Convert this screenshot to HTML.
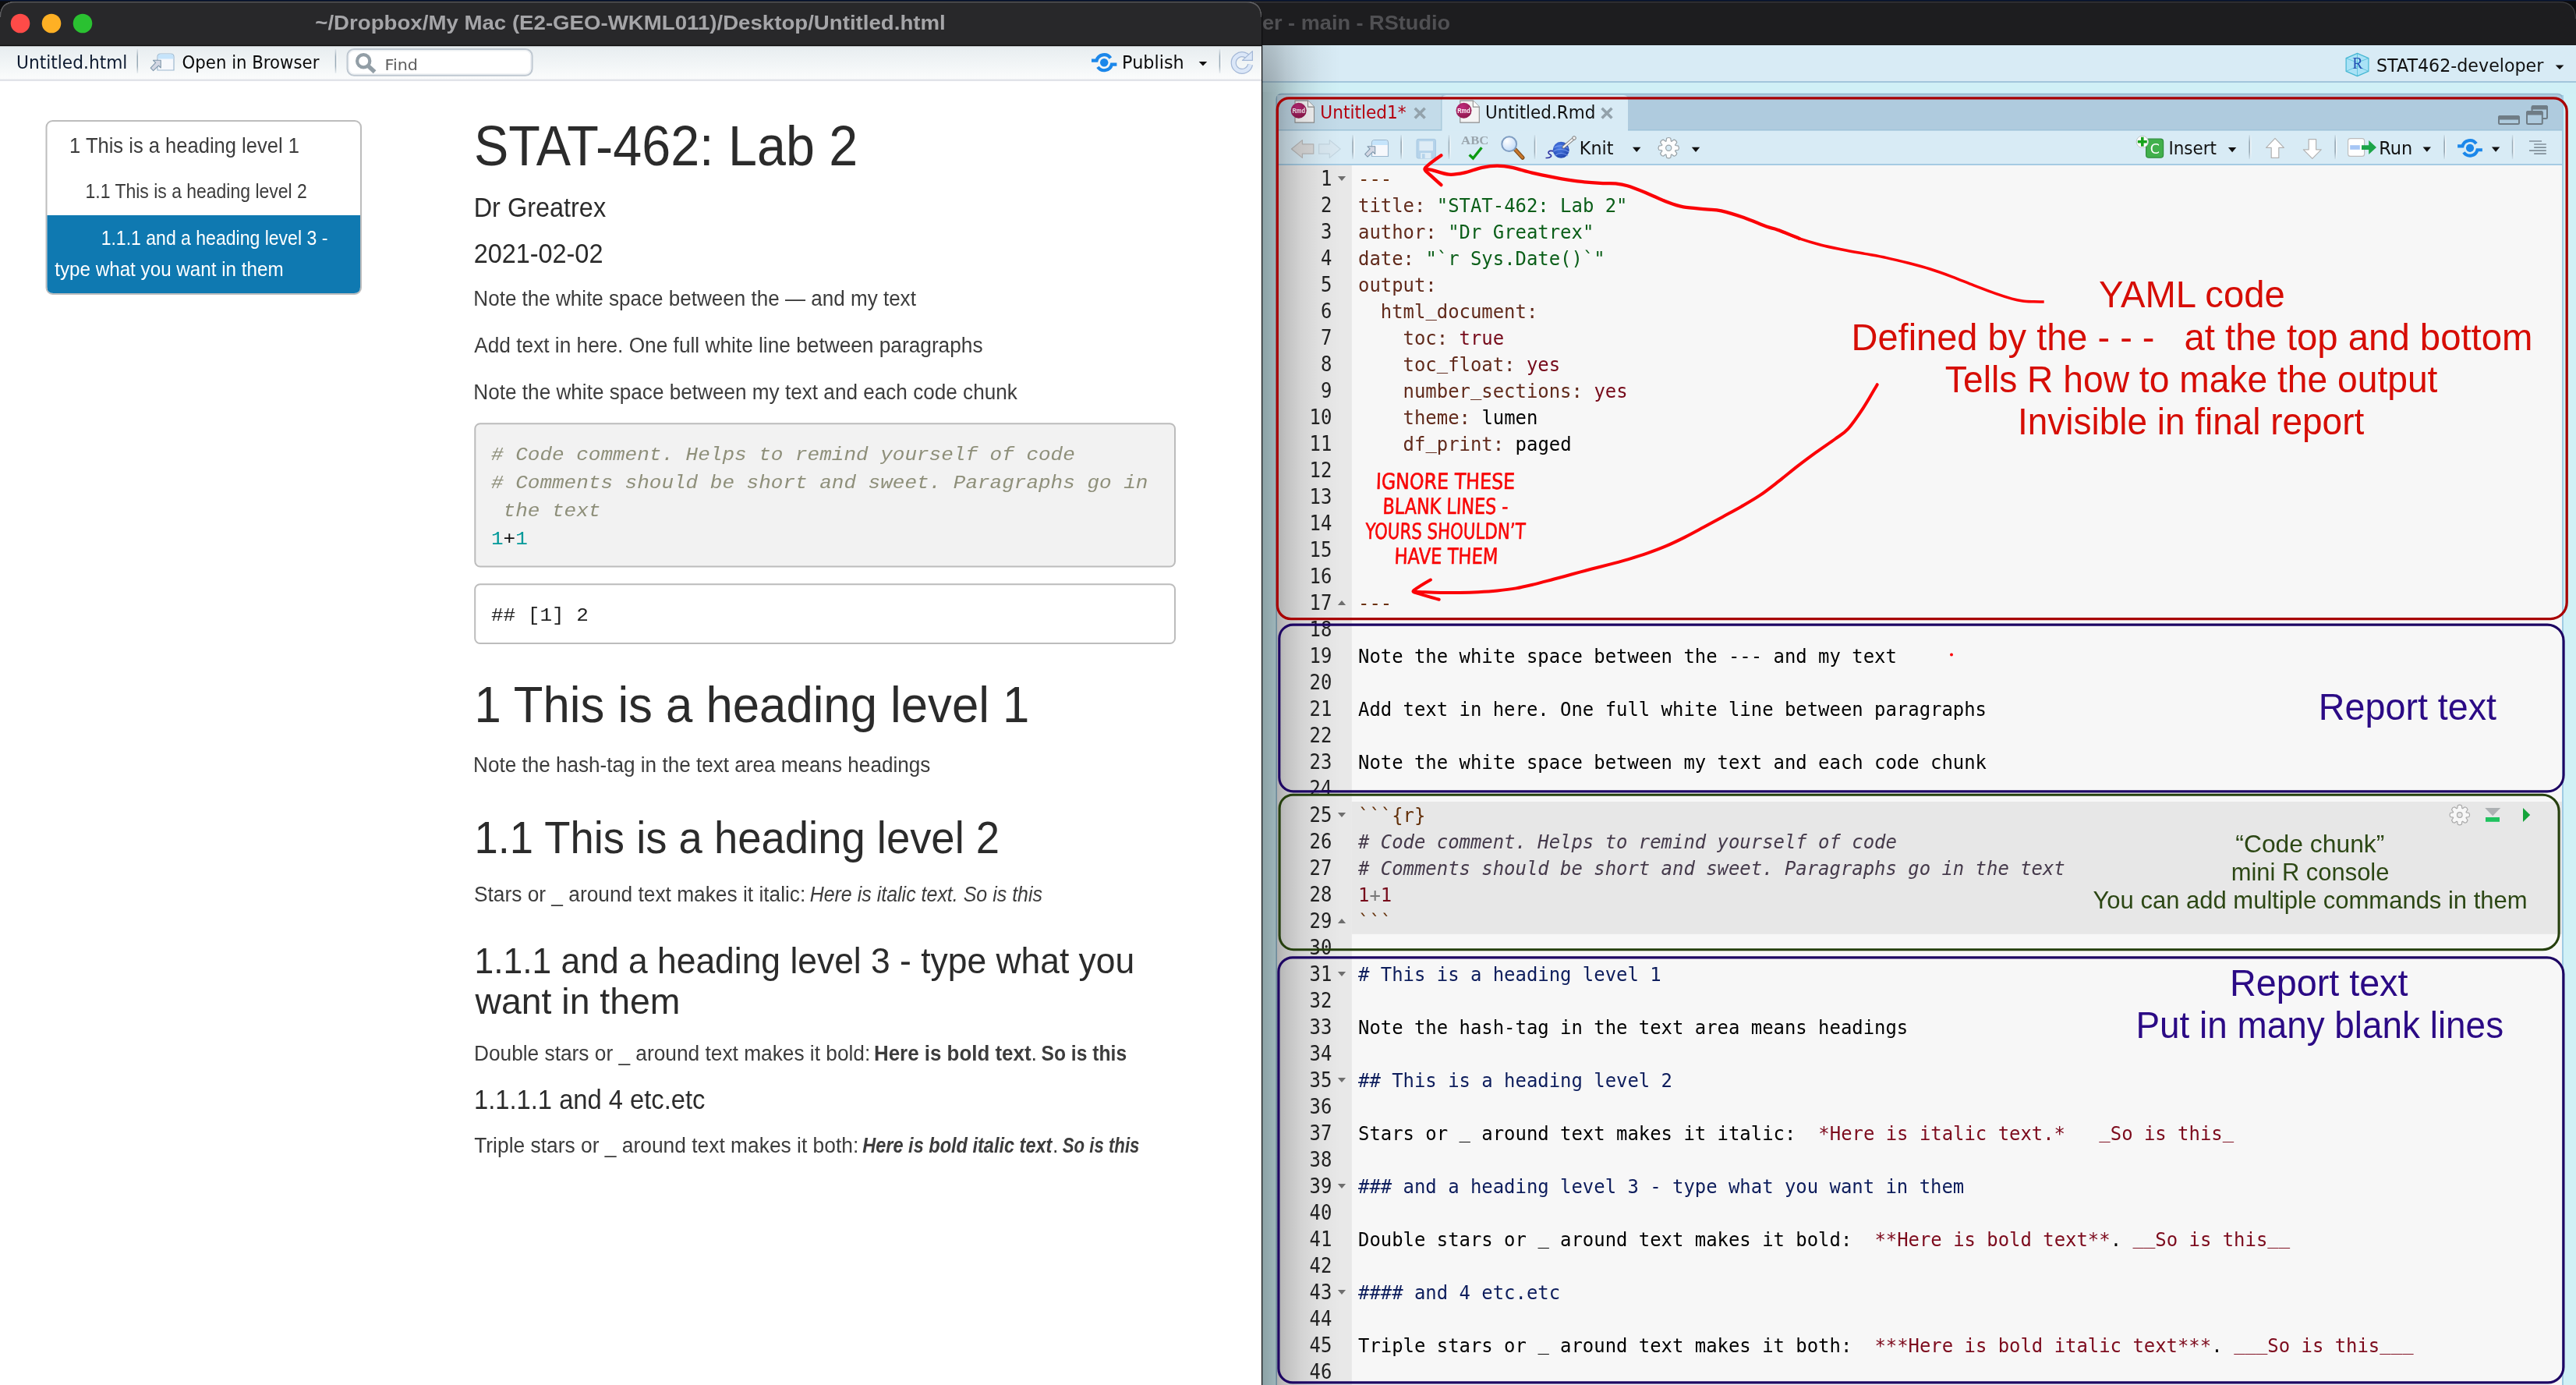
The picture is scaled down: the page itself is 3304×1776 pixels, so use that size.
<!DOCTYPE html>
<html lang="en"><head><meta charset="utf-8"><title>RStudio - anatomy of an R Markdown file</title>
<style>
html,body{margin:0;padding:0;background:#0a1220;overflow:hidden}
svg{display:block;will-change:transform}
text{white-space:pre}
</style></head><body>
<svg width="3304" height="1776" viewBox="0 0 3304 1776">
<defs>
<linearGradient id="tb1" x1="0" y1="0" x2="0" y2="1"><stop offset="0" stop-color="#e7edf0"/><stop offset="1" stop-color="#fbfcfc"/></linearGradient>
<linearGradient id="shadow" x1="0" y1="0" x2="1" y2="0"><stop offset="0" stop-color="#000" stop-opacity=".33"/><stop offset=".17" stop-color="#000" stop-opacity=".25"/><stop offset=".3" stop-color="#000" stop-opacity=".17"/><stop offset=".5" stop-color="#000" stop-opacity=".09"/><stop offset=".75" stop-color="#000" stop-opacity=".03"/><stop offset="1" stop-color="#000" stop-opacity="0"/></linearGradient>
<linearGradient id="shadowtop" x1="0" y1="0" x2="1" y2="1"><stop offset="0" stop-color="#d8ebf5" stop-opacity=".35"/><stop offset=".6" stop-color="#d8ebf5" stop-opacity="0"/></linearGradient>
<linearGradient id="sepd" x1="0" y1="0" x2="0" y2="1"><stop offset="0" stop-color="#9aabb7" stop-opacity=".15"/><stop offset=".3" stop-color="#9aabb7" stop-opacity="1"/><stop offset=".7" stop-color="#9aabb7" stop-opacity="1"/><stop offset="1" stop-color="#9aabb7" stop-opacity=".15"/></linearGradient>
<linearGradient id="sepl" x1="0" y1="0" x2="0" y2="1"><stop offset="0" stop-color="#fff" stop-opacity=".1"/><stop offset=".3" stop-color="#fff" stop-opacity=".75"/><stop offset=".7" stop-color="#fff" stop-opacity=".75"/><stop offset="1" stop-color="#fff" stop-opacity=".1"/></linearGradient>
<radialGradient id="rmdg" cx=".4" cy=".3" r=".8"><stop offset="0" stop-color="#c02a7c"/><stop offset="1" stop-color="#8a1746"/></radialGradient>
<radialGradient id="lens" cx=".35" cy=".3" r=".8"><stop offset="0" stop-color="#ffffff"/><stop offset="1" stop-color="#bcd7f7"/></radialGradient>
<radialGradient id="yarn" cx=".4" cy=".35" r=".75"><stop offset="0" stop-color="#4a7de8"/><stop offset="1" stop-color="#1d3fa8"/></radialGradient>
</defs>

<g id="rstudio-window">
<rect x="0" y="0" width="3304" height="1776" fill="#0c0c0e"/>
<rect x="0" y="0" width="3304" height="1.3" fill="#0b1836"/>
<path d="M1600 2 H3282 Q3304 2 3304 24 V60 H1600 Z" fill="#1d1d1f"/>
<path d="M1600 2.6 H3282 Q3303.4 2.6 3303.4 24" fill="none" stroke="#3b3b3e" stroke-width="1.1"/>
<rect x="1600" y="57.8" width="1704" height="1.5" fill="#0b0b0c"/>
<text x="1618.94" y="38" font-family="'Liberation Sans',sans-serif" font-size="26" fill="#505053" font-weight="700" textLength="241.12" lengthAdjust="spacingAndGlyphs" >er - main - RStudio</text>
<rect x="1600" y="58" width="1704" height="47" fill="#d8ebf5"/>
<rect x="1600" y="104" width="1704" height="2" fill="#a3c6dc"/>
<rect x="1600" y="106" width="1704" height="1670" fill="#d0f0f6"/>
<rect x="3288" y="120" width="16" height="1656" fill="#d0f1f6"/>
<text x="3048.04" y="92" font-family="'DejaVu Sans',sans-serif" font-size="22.5" fill="#111" textLength="214.36" lengthAdjust="spacingAndGlyphs" >STAT462-developer</text>
<path d="M3277.7 83.4 h10.7 l-5.35 5.6 z" fill="#111"/>
</g>
<g id="source-pane">
<rect x="1637.25" y="120.5" width="1649.75" height="1670" rx="6.5" fill="#afcbde" stroke="#8fb5cc" stroke-width="1.7"/>
<rect x="1638.1" y="122" width="211" height="45" fill="#c3dbe9"/>
<rect x="1848.4" y="127" width="1.2" height="40" fill="#9dc0d4"/>
<path d="M1849.5 167 V128 Q1849.5 122 1855.5 122 H2082 Q2088 122 2088 128 V167 Z" fill="#d8ebf5"/>
<rect x="1638.1" y="166" width="1648" height="1.6" fill="#9fc4da"/>
<rect x="1849.5" y="165.5" width="238.5" height="2.5" fill="#d8ebf5"/>
<rect x="1638.1" y="167.6" width="1648" height="43" fill="#d8ebf5"/>
<rect x="1638.1" y="210" width="1648" height="2" fill="#a5cbe3"/>
<rect x="1638.1" y="212" width="1648" height="1564" fill="#f7f7f7"/>
<rect x="1638.1" y="212" width="95.7" height="1564" fill="#e8e8e8"/>
<rect x="1733.8" y="1028" width="1552.3" height="169.8" fill="#e7e7e7"/>
<rect x="3286" y="122" width="2" height="1654" fill="#9fcbe4"/>
</g>
<text x="1693.32" y="152" font-family="'DejaVu Sans',sans-serif" font-size="22.5" fill="#b5000f" textLength="110.33" lengthAdjust="spacingAndGlyphs" >Untitled1*</text>
<text x="1904.93" y="152" font-family="'DejaVu Sans',sans-serif" font-size="22.5" fill="#111" textLength="141.42" lengthAdjust="spacingAndGlyphs" >Untitled.Rmd</text>
<path d="M1814.8 138.7 L1827.6000000000001 151.5 M1827.6000000000001 138.7 L1814.8 151.5" stroke="#93a2ab" stroke-width="3.6" fill="none"/>
<path d="M2054.6 138.7 L2067.4 151.5 M2067.4 138.7 L2054.6 151.5" stroke="#93a2ab" stroke-width="3.6" fill="none"/>
<text x="2025.82" y="198" font-family="'DejaVu Sans',sans-serif" font-size="22.5" fill="#111" textLength="43.62" lengthAdjust="spacingAndGlyphs" >Knit</text>
<text x="2781.39" y="198" font-family="'DejaVu Sans',sans-serif" font-size="22.5" fill="#111" textLength="61.62" lengthAdjust="spacingAndGlyphs" >Insert</text>
<text x="3051.19" y="198" font-family="'DejaVu Sans',sans-serif" font-size="22.5" fill="#111" textLength="43.12" lengthAdjust="spacingAndGlyphs" >Run</text>
<path d="M2094 188.7 h10.4 l-5.2 6.3 z" fill="#111"/>
<path d="M2169.8 188.7 h10.4 l-5.2 6.3 z" fill="#111"/>
<path d="M2857.9 188.9 h10.4 l-5.2 6.3 z" fill="#111"/>
<path d="M3107.6 188.4 h10.4 l-5.2 6.3 z" fill="#111"/>
<path d="M3195.9 188.4 h10.4 l-5.2 6.3 z" fill="#111"/>
<rect x="1734.3" y="173" width="1.7" height="31" fill="url(#sepd)"/><rect x="1736.0" y="173" width="1.3" height="31" fill="url(#sepl)"/>
<rect x="1796.3" y="173" width="1.7" height="31" fill="url(#sepd)"/><rect x="1798.0" y="173" width="1.3" height="31" fill="url(#sepl)"/>
<rect x="1857.7" y="173" width="1.7" height="31" fill="url(#sepd)"/><rect x="1859.4" y="173" width="1.3" height="31" fill="url(#sepl)"/>
<rect x="1967.7" y="173" width="1.7" height="31" fill="url(#sepd)"/><rect x="1969.4" y="173" width="1.3" height="31" fill="url(#sepl)"/>
<rect x="2884.4" y="173" width="1.7" height="31" fill="url(#sepd)"/><rect x="2886.1" y="173" width="1.3" height="31" fill="url(#sepl)"/>
<rect x="2994.3" y="173" width="1.7" height="31" fill="url(#sepd)"/><rect x="2996.0" y="173" width="1.3" height="31" fill="url(#sepl)"/>
<rect x="3134.3" y="173" width="1.7" height="31" fill="url(#sepd)"/><rect x="3136.0" y="173" width="1.3" height="31" fill="url(#sepl)"/>
<rect x="3221.8" y="173" width="1.7" height="31" fill="url(#sepd)"/><rect x="3223.5" y="173" width="1.3" height="31" fill="url(#sepl)"/>
<g id="editor-text" font-family="'DejaVu Sans Mono','Liberation Mono',monospace" font-size="25">
<g transform="translate(1708.4 0) scale(0.9307 1)" fill="#222" text-anchor="end" font-size="25.7">
<text x="0" y="238">1</text>
<text x="0" y="272">2</text>
<text x="0" y="306">3</text>
<text x="0" y="340">4</text>
<text x="0" y="374">5</text>
<text x="0" y="408">6</text>
<text x="0" y="442">7</text>
<text x="0" y="476">8</text>
<text x="0" y="510">9</text>
<text x="0" y="544">10</text>
<text x="0" y="578">11</text>
<text x="0" y="612">12</text>
<text x="0" y="646">13</text>
<text x="0" y="680">14</text>
<text x="0" y="714">15</text>
<text x="0" y="748">16</text>
<text x="0" y="782">17</text>
<text x="0" y="816">18</text>
<text x="0" y="850">19</text>
<text x="0" y="884">20</text>
<text x="0" y="918">21</text>
<text x="0" y="952">22</text>
<text x="0" y="986">23</text>
<text x="0" y="1020">24</text>
<text x="0" y="1054">25</text>
<text x="0" y="1088">26</text>
<text x="0" y="1122">27</text>
<text x="0" y="1156">28</text>
<text x="0" y="1190">29</text>
<text x="0" y="1224">30</text>
<text x="0" y="1258">31</text>
<text x="0" y="1292">32</text>
<text x="0" y="1326">33</text>
<text x="0" y="1360">34</text>
<text x="0" y="1394">35</text>
<text x="0" y="1428">36</text>
<text x="0" y="1462">37</text>
<text x="0" y="1496">38</text>
<text x="0" y="1530">39</text>
<text x="0" y="1564">40</text>
<text x="0" y="1598">41</text>
<text x="0" y="1632">42</text>
<text x="0" y="1666">43</text>
<text x="0" y="1700">44</text>
<text x="0" y="1734">45</text>
<text x="0" y="1768">46</text>
</g>
<g transform="translate(1742 0) scale(0.9567 1)">
<text y="238"><tspan x="0.00" fill="#6c3210">---</tspan></text>
<text y="272"><tspan x="0.00" fill="#612a1b">title:</tspan><tspan x="105.36" fill="#0a5e18">"STAT-462: Lab 2"</tspan></text>
<text y="306"><tspan x="0.00" fill="#612a1b">author:</tspan><tspan x="120.41" fill="#0a5e18">"Dr Greatrex"</tspan></text>
<text y="340"><tspan x="0.00" fill="#612a1b">date:</tspan><tspan x="90.31" fill="#0a5e18">"`r Sys.Date()`"</tspan></text>
<text y="374"><tspan x="0.00" fill="#612a1b">output:</tspan></text>
<text y="408"><tspan x="30.10" fill="#612a1b">html document:</tspan></text>
<text y="405"><tspan x="90.31" fill="#612a1b">_</tspan></text>
<text y="442"><tspan x="60.21" fill="#612a1b">toc:</tspan><tspan x="135.46" fill="#760a1a">true</tspan></text>
<text y="476"><tspan x="60.21" fill="#612a1b">toc float:</tspan><tspan x="225.77" fill="#760a1a">yes</tspan></text>
<text y="473"><tspan x="105.36" fill="#612a1b">_</tspan></text>
<text y="510"><tspan x="60.21" fill="#612a1b">number sections:</tspan><tspan x="316.08" fill="#760a1a">yes</tspan></text>
<text y="507"><tspan x="150.51" fill="#612a1b">_</tspan></text>
<text y="544"><tspan x="60.21" fill="#612a1b">theme:</tspan><tspan x="165.56" fill="#000">lumen</tspan></text>
<text y="578"><tspan x="60.21" fill="#612a1b">df print:</tspan><tspan x="210.72" fill="#000">paged</tspan></text>
<text y="575"><tspan x="90.31" fill="#612a1b">_</tspan></text>
<text y="782"><tspan x="0.00" fill="#6c3210">---</tspan></text>
<text y="850"><tspan x="0.00" fill="#000">Note the white space between the --- and my text</tspan></text>
<text y="918"><tspan x="0.00" fill="#000">Add text in here. One full white line between paragraphs</tspan></text>
<text y="986"><tspan x="0.00" fill="#000">Note the white space between my text and each code chunk</tspan></text>
<text y="1054"><tspan x="0.00" fill="#63300a">```{r}</tspan></text>
<text y="1088"><tspan x="0.00" fill="#453a4b" font-style="italic"># Code comment. Helps to remind yourself of code</tspan></text>
<text y="1122"><tspan x="0.00" fill="#453a4b" font-style="italic"># Comments should be short and sweet. Paragraphs go in the text</tspan></text>
<text y="1156"><tspan x="0.00" fill="#760a1a">1</tspan><tspan x="15.05" fill="#777">+</tspan><tspan x="30.10" fill="#760a1a">1</tspan></text>
<text y="1190"><tspan x="0.00" fill="#63300a">```</tspan></text>
<text y="1258"><tspan x="0.00" fill="#0d1d5c"># This is a heading level 1</tspan></text>
<text y="1326"><tspan x="0.00" fill="#000">Note the hash-tag in the text area means headings</tspan></text>
<text y="1394"><tspan x="0.00" fill="#0d1d5c">## This is a heading level 2</tspan></text>
<text y="1462"><tspan x="0.00" fill="#000">Stars or   around text makes it italic:</tspan><tspan x="617.10" fill="#7c0a1c">*Here is italic text.*</tspan><tspan x="993.38" fill="#7c0a1c"> So is this </tspan></text>
<text y="1459"><tspan x="135.46" fill="#000">_</tspan><tspan x="993.38" fill="#7c0a1c">_</tspan><tspan x="1158.95" fill="#7c0a1c">_</tspan></text>
<text y="1530"><tspan x="0.00" fill="#0d1d5c">### and a heading level 3 - type what you want in them</tspan></text>
<text y="1598"><tspan x="0.00" fill="#000">Double stars or   around text makes it bold:</tspan><tspan x="692.36" fill="#7c0a1c">**Here is bold text**</tspan><tspan x="1008.44" fill="#000">.</tspan><tspan x="1038.54" fill="#7c0a1c">  So is this  </tspan></text>
<text y="1595"><tspan x="240.82" fill="#000">_</tspan><tspan x="1038.54" fill="#7c0a1c">_</tspan><tspan x="1053.59" fill="#7c0a1c">_</tspan><tspan x="1219.15" fill="#7c0a1c">_</tspan><tspan x="1234.20" fill="#7c0a1c">_</tspan></text>
<text y="1666"><tspan x="0.00" fill="#0d1d5c">#### and 4 etc.etc</tspan></text>
<text y="1734"><tspan x="0.00" fill="#000">Triple stars or   around text makes it both:</tspan><tspan x="692.36" fill="#7c0a1c">***Here is bold italic text***</tspan><tspan x="1143.90" fill="#000">.</tspan><tspan x="1174.00" fill="#7c0a1c">   So is this   </tspan></text>
<text y="1731"><tspan x="240.82" fill="#000">_</tspan><tspan x="1174.00" fill="#7c0a1c">_</tspan><tspan x="1189.05" fill="#7c0a1c">_</tspan><tspan x="1204.10" fill="#7c0a1c">_</tspan><tspan x="1369.67" fill="#7c0a1c">_</tspan><tspan x="1384.72" fill="#7c0a1c">_</tspan><tspan x="1399.77" fill="#7c0a1c">_</tspan></text>
</g></g>
<path d="M1715.9 226.1 h10.2 l-5.1 5.8 z" fill="#6e6e6e"/>
<path d="M1715.9 1042.1 h10.2 l-5.1 5.8 z" fill="#6e6e6e"/>
<path d="M1715.9 1246.1 h10.2 l-5.1 5.8 z" fill="#6e6e6e"/>
<path d="M1715.9 1382.1 h10.2 l-5.1 5.8 z" fill="#6e6e6e"/>
<path d="M1715.9 1518.1 h10.2 l-5.1 5.8 z" fill="#6e6e6e"/>
<path d="M1715.9 1654.1 h10.2 l-5.1 5.8 z" fill="#6e6e6e"/>
<path d="M1715.9 775.9 h10.2 l-5.1 -5.8 z" fill="#6e6e6e"/>
<path d="M1715.9 1183.9 h10.2 l-5.1 -5.8 z" fill="#6e6e6e"/>
<g id="icons">
<g transform="translate(1749.5 178.5)"><path d="M10 22 V5 Q10 1 14 1 H27 Q31 1 31 5 V22 Z" fill="#f6f8fc" stroke="#9db8cf" stroke-width="1.2"/><path d="M10.6 7.5 V5 Q10.6 1.6 14 1.6 H27 Q30.4 1.6 30.4 5 V7.5 Z" fill="#c5e4fb"/><path d="M4.5 9.3 H14.2 V19 L11.4 16.2 L4.6 22.6 L1.2 19.2 L7.6 12.4 Z" fill="#d3d7e3" stroke="#7f97ab" stroke-width="1.1" stroke-linejoin="round"/></g>
<g transform="translate(3168 189.8) scale(0.98)" fill="none" stroke="#1b87ea" stroke-width="4.2"><path d="M-16.2 -2.5 H-9.7 A10 10 0 0 1 8.2 -5.7"/><path d="M16.2 2.5 H9.7 A10 10 0 0 1 -8.2 5.7"/><circle cx="0" cy="0" r="5.2" fill="#1b87ea" stroke="none"/></g>
<g transform="translate(1660.5 128.6)"><path d="M0.5 0.5 H17 L25 8.5 V28.5 H0.5 Z" fill="#f4f4f4" stroke="#8d8d8d" stroke-width="1.1"/><path d="M17 0.5 V8.5 H25" fill="#fdfdfd" stroke="#8d8d8d" stroke-width="1.1" stroke-linejoin="round"/><circle cx="5.2" cy="13.2" r="10" fill="url(#rmdg)"/><text x="5.2" y="16" text-anchor="middle" font-family="'Liberation Sans',sans-serif" font-weight="bold" font-size="8.2" fill="#fff" textLength="16.5" lengthAdjust="spacingAndGlyphs">Rmd</text></g>
<g transform="translate(1872.3 128.6)"><path d="M0.5 0.5 H17 L25 8.5 V28.5 H0.5 Z" fill="#f4f4f4" stroke="#8d8d8d" stroke-width="1.1"/><path d="M17 0.5 V8.5 H25" fill="#fdfdfd" stroke="#8d8d8d" stroke-width="1.1" stroke-linejoin="round"/><circle cx="5.2" cy="13.2" r="10" fill="url(#rmdg)"/><text x="5.2" y="16" text-anchor="middle" font-family="'Liberation Sans',sans-serif" font-weight="bold" font-size="8.2" fill="#fff" textLength="16.5" lengthAdjust="spacingAndGlyphs">Rmd</text></g>
<path d="M1656.5 191 L1670.4 179.6 V184.8 H1684.8 V197.2 H1670.4 V202.4 Z" fill="#d9d9d9" stroke="#b9b9b9" stroke-width="1.2" stroke-linejoin="round"/>
<path d="M1719.2 191 L1705.3 179.6 V184.8 H1691.6 V197.2 H1705.3 V202.4 Z" fill="#d9e8f1" stroke="#c4d6e1" stroke-width="1.2" stroke-linejoin="round"/>
<g><rect x="1817" y="178.4" width="24.4" height="24.6" rx="2" fill="#b5d3ea" stroke="#a7c8e2" stroke-width="1"/><rect x="1820.4" y="181.2" width="17.6" height="12" fill="#deecf6"/><rect x="1822.2" y="196" width="13.2" height="7" fill="#deecf6"/><rect x="1824" y="197.2" width="3.6" height="5.8" fill="#b5d3ea"/></g>
<text x="1874.14" y="185" font-family="'Liberation Serif',serif" font-size="14.5" fill="#9aa5ad" font-weight="700" textLength="35.13" lengthAdjust="spacingAndGlyphs" >ABC</text>
<path d="M1884.6 198.6 L1889.4 203 L1900.4 189.2" fill="none" stroke="#0c9a12" stroke-width="3.4"/>
<path d="M1943.4 191.8 L1953 202.2" stroke="#7a4a1c" stroke-width="5.2" stroke-linecap="round"/><path d="M1943.6 192 L1952.8 202" stroke="#c9762a" stroke-width="3" stroke-linecap="round"/><circle cx="1935.7" cy="184.7" r="9.4" fill="url(#lens)" stroke="#7f9dc2" stroke-width="2"/>
<path d="M1993 194 C1986 192 1984 196 1988 198 C1992 200 1988 203 1982.5 202.5" fill="none" stroke="#2b2fa0" stroke-width="1.6"/><circle cx="2002.2" cy="192.3" r="10.5" fill="url(#yarn)"/><path d="M1993.5 189 C1999 186 2006 186 2011 190 M1992.5 194 C1999 190 2007 191 2012.5 195 M1995 199 C2000 195 2007 196 2011 200" fill="none" stroke="#7ea0f0" stroke-width="1.2" opacity=".8"/><path d="M2005.5 188.6 L2018.6 177.4" stroke="#777" stroke-width="4" stroke-linecap="round"/><path d="M2005.5 188.6 L2018.6 177.4" stroke="#f4f4f4" stroke-width="2.2" stroke-linecap="round"/><circle cx="2019" cy="177" r="2.3" fill="#f4f4f4" stroke="#777" stroke-width="1"/>
<path d="M2148.83 186.50 L2152.61 187.13 Q2154.19 189.70 2152.61 192.27 L2148.83 192.90 A9.20 9.20 0 0 1 2148.56 193.54 L2150.79 196.66 Q2150.09 199.59 2147.16 200.29 L2144.04 198.06 A9.20 9.20 0 0 1 2143.40 198.33 L2142.77 202.11 Q2140.20 203.69 2137.63 202.11 L2137.00 198.33 A9.20 9.20 0 0 1 2136.36 198.06 L2133.24 200.29 Q2130.31 199.59 2129.61 196.66 L2131.84 193.54 A9.20 9.20 0 0 1 2131.57 192.90 L2127.79 192.27 Q2126.21 189.70 2127.79 187.13 L2131.57 186.50 A9.20 9.20 0 0 1 2131.84 185.86 L2129.61 182.74 Q2130.31 179.81 2133.24 179.11 L2136.36 181.34 A9.20 9.20 0 0 1 2137.00 181.07 L2137.63 177.29 Q2140.20 175.71 2142.77 177.29 L2143.40 181.07 A9.20 9.20 0 0 1 2144.04 181.34 L2147.16 179.11 Q2150.09 179.81 2150.79 182.74 L2148.56 185.86 Z" fill="#fdfdfd" stroke="#9aa3a8" stroke-width="1.2" stroke-linejoin="round"/>
<circle cx="2140.2" cy="189.7" r="3.6" fill="#d8ebf5" stroke="#9aa3a8" stroke-width="1.2"/>
<path d="M3163.24 1041.87 L3166.83 1042.51 Q3168.37 1045.00 3166.83 1047.49 L3163.24 1048.13 A9.00 9.00 0 0 1 3162.98 1048.76 L3165.07 1051.75 Q3164.39 1054.59 3161.55 1055.27 L3158.56 1053.18 A9.00 9.00 0 0 1 3157.93 1053.44 L3157.29 1057.03 Q3154.80 1058.57 3152.31 1057.03 L3151.67 1053.44 A9.00 9.00 0 0 1 3151.04 1053.18 L3148.05 1055.27 Q3145.21 1054.59 3144.53 1051.75 L3146.62 1048.76 A9.00 9.00 0 0 1 3146.36 1048.13 L3142.77 1047.49 Q3141.23 1045.00 3142.77 1042.51 L3146.36 1041.87 A9.00 9.00 0 0 1 3146.62 1041.24 L3144.53 1038.25 Q3145.21 1035.41 3148.05 1034.73 L3151.04 1036.82 A9.00 9.00 0 0 1 3151.67 1036.56 L3152.31 1032.97 Q3154.80 1031.43 3157.29 1032.97 L3157.93 1036.56 A9.00 9.00 0 0 1 3158.56 1036.82 L3161.55 1034.73 Q3164.39 1035.41 3165.07 1038.25 L3162.98 1041.24 Z" fill="#f7f7f7" stroke="#a9a9a9" stroke-width="1.2" stroke-linejoin="round"/>
<circle cx="3154.8" cy="1045" r="3.3" fill="#e7e7e7" stroke="#a9a9a9" stroke-width="1.2"/>
<rect x="2752.6" y="178.2" width="22" height="24" rx="3.5" fill="#41b04c" stroke="#2f8d3b" stroke-width="1.2"/>
<text x="2763.8" y="197" font-family="'DejaVu Sans',sans-serif" font-size="17.5" fill="#fff" text-anchor="middle" >C</text>
<circle cx="2747.8" cy="181.8" r="7.6" fill="#fff" stroke="#b9c2c7" stroke-width="1"/><path d="M2741.8 181.8 H2753.8 M2747.8 175.8 V187.8" stroke="#18a31c" stroke-width="3.6"/>
<path d="M2918 177.4 L2929.4 189.4 H2922.8 V202.4 H2913.2 V189.4 H2906.6 Z" fill="#fff" stroke="#b2b2b2" stroke-width="1.2" stroke-linejoin="round"/>
<path d="M2965.8 203.4 L2977.2 191.8 H2970.6 V178.6 H2961.2 V191.8 H2954.4 Z" fill="#fff" stroke="#b2b2b2" stroke-width="1.2" stroke-linejoin="round"/>
<rect x="3011.6" y="177.6" width="21" height="22.8" rx="3" fill="#fff" stroke="#bcbcbc" stroke-width="1.1"/><rect x="3014.2" y="186.2" width="12.6" height="5.6" fill="#a6c6f5"/><path d="M3029 186.2 H3038.2 V180 L3048 189 L3038.2 198 V191.9 H3029 Z" fill="#1ca549"/>
<path d="M3244 181 H3260 M3250.2 185 H3265.8 M3250.2 189.1 H3265.8 M3244 193.1 H3265.8 M3250.2 197.1 H3265.8" stroke="#81909a" stroke-width="1.7"/>
<rect x="3205" y="149" width="26" height="10" rx="1.5" fill="#afcbde" stroke="#6f7c85" stroke-width="2"/><path d="M3204 153.6 V151 Q3204 148 3207 148 H3229 Q3232 148 3232 151 V153.6 Z" fill="#6f7c85"/>
<rect x="3247.6" y="136" width="19.4" height="16" rx="1.5" fill="#afcbde" stroke="#6f7c85" stroke-width="2"/><path d="M3246.6 140.4 V138 Q3246.6 135 3249.6 135 H3265 Q3268 135 3268 138 V140.4 Z" fill="#6f7c85"/>
<rect x="3241" y="143" width="19.8" height="16" rx="1.5" fill="#afcbde" stroke="#6f7c85" stroke-width="2"/><path d="M3240 147.4 V145 Q3240 142 3243 142 H3258.8 Q3261.8 142 3261.8 145 V147.4 Z" fill="#6f7c85"/>
<g transform="translate(3023.5 83)"><path d="M0 -14.6 L14.4 -8.4 V8.4 L0 14.6 L-14.4 8.4 V-8.4 Z" fill="#a9e2f6" stroke="#45b7d3" stroke-width="1.2" stroke-linejoin="round"/><path d="M-14.4 -8.4 L0 -2.6 L14.4 -8.4 M0 -2.6 V14.6 M-14.4 8.4 L0 2.2 L14.4 8.4 M0 -14.6 V2.2" fill="none" stroke="#45b7d3" stroke-width=".9" opacity=".75"/><text x="0.3" y="5.2" text-anchor="middle" font-family="'Liberation Serif',serif" font-size="20" fill="#2350b4">R</text></g>
<path d="M3187.2 1036 H3207.2 L3197.2 1046.2 Z" fill="#adb1b3"/><rect x="3188" y="1048" width="18" height="5.8" fill="#1fc25f"/>
<path d="M3236 1036 L3245.2 1045 L3236 1054 Z" fill="#14a33a"/>
</g>
<rect x="1619" y="58" width="100" height="1718" fill="url(#shadow)"/>
<rect x="1619" y="58" width="100" height="60" fill="url(#shadowtop)"/>
<g id="annotations" fill="none">
<path d="M1652.8999999999999 125.8 H3275.2 A17 17 0 0 1 3292.2 142.8 V772.6 A21 21 0 0 1 3271.2 793.6 H1655.8 A17.5 17.5 0 0 1 1638.3 776.1 V140.4 A14.6 14.6 0 0 1 1652.8999999999999 125.8 Z" stroke="#a80000" stroke-width="3.3"/>
<path d="M1658.3 801.1 H3267.2999999999997 A20.8 20.8 0 0 1 3288.1 821.9 V993.9 A21 21 0 0 1 3267.1 1014.9 H1658.8 A18 18 0 0 1 1640.8 996.9 V818.6 A17.5 17.5 0 0 1 1658.3 801.1 Z" stroke="#1d0563" stroke-width="3.1"/>
<path d="M1658.3999999999999 1019.2 H3261.1 A21 21 0 0 1 3282.1 1040.2 V1196.8 A21 21 0 0 1 3261.1 1217.8 H1659.1 A18 18 0 0 1 1641.1 1199.8 V1036.5 A17.3 17.3 0 0 1 1658.3999999999999 1019.2 Z" stroke="#253f0d" stroke-width="3.1"/>
<path d="M1657.9 1227.9 H3266.9 A21 21 0 0 1 3287.9 1248.9 V1752.9 A20 20 0 0 1 3267.9 1772.9 H1657.9 A18 18 0 0 1 1639.9 1754.9 V1245.9 A18 18 0 0 1 1657.9 1227.9 Z" stroke="#1d0563" stroke-width="3.2"/>
<path d="M1828.5 217.2 C1829.7 217.3 1831.0 216.7 1835.9 217.8 C1840.9 218.9 1851.2 223.0 1858.2 223.7 C1865.2 224.3 1870.5 223.2 1877.6 221.7 C1884.7 220.2 1893.8 216.4 1900.9 214.9 C1908.0 213.4 1913.8 212.6 1920.3 212.6 C1926.8 212.6 1932.3 213.4 1939.8 214.9 C1947.2 216.4 1956.0 219.6 1965.0 221.7 C1974.0 223.8 1984.4 225.8 1994.1 227.6 C2003.8 229.4 2013.5 231.2 2023.2 232.4 C2032.9 233.6 2044.2 234.4 2052.3 234.9 C2060.4 235.4 2065.9 234.8 2071.7 235.3 C2077.5 235.9 2080.8 236.2 2087.3 238.2 C2093.8 240.1 2101.9 243.4 2110.6 247.0 C2119.3 250.6 2131.6 256.5 2139.7 259.6 C2147.8 262.7 2151.0 263.9 2159.1 265.4 C2167.2 266.8 2180.1 267.5 2188.2 268.3 C2196.3 269.1 2199.5 268.5 2207.6 270.3 C2215.7 272.1 2227.0 275.6 2236.7 279.0 C2246.4 282.4 2258.6 288.0 2265.8 290.6 C2273.0 293.2 2273.0 292.1 2280.0 294.7 C2287.0 297.2 2303.2 304.0 2307.9 305.9" stroke="#fb0207" stroke-width="4.3" stroke-linecap="round"/>
<path d="M2280.0 294.7 C2284.7 296.6 2298.6 302.6 2307.9 305.9 C2317.2 309.1 2326.6 311.8 2335.9 314.2 C2345.2 316.6 2354.5 318.3 2363.8 320.2 C2373.1 322.1 2382.5 323.7 2391.8 325.4 C2401.1 327.1 2410.4 328.6 2419.7 330.6 C2429.0 332.6 2438.4 334.9 2447.7 337.3 C2457.0 339.7 2466.3 342.1 2475.6 345.0 C2484.9 347.9 2494.3 351.3 2503.6 354.8 C2512.9 358.3 2522.2 362.3 2531.5 365.9 C2540.8 369.5 2551.3 373.5 2559.5 376.4 C2567.7 379.3 2574.7 381.5 2580.5 383.1 C2586.3 384.7 2589.8 385.3 2594.4 385.9 C2599.1 386.5 2603.9 386.6 2608.4 386.8 C2612.9 387.0 2619.5 386.9 2621.7 386.9" stroke="#fb0207" stroke-width="3.5" stroke-linecap="butt"/>
<path d="M1848.5 199.2 C1840 205 1832 211 1828.3 215 Q1826.4 217.2 1829 219.6 C1835 225 1842 231.5 1848.5 237.2" stroke="#fb0207" stroke-width="4.3" stroke-linecap="round" stroke-linejoin="round"/>
<path d="M2407.7 493.2 C2404.7 498.2 2395.9 513.9 2389.7 523.3 C2383.5 532.7 2376.4 543.2 2370.4 549.8 C2364.4 556.4 2360.4 558.0 2353.6 563.0 C2346.8 568.0 2337.5 574.1 2329.5 579.9 C2321.5 585.7 2313.4 591.7 2305.4 597.9 C2297.4 604.1 2289.3 611.0 2281.3 617.2 C2273.3 623.4 2265.3 629.8 2257.3 635.2 C2249.3 640.6 2241.2 645.1 2233.2 649.7 C2225.2 654.3 2217.2 658.5 2209.2 662.9 C2201.2 667.3 2193.1 671.8 2185.1 676.1 C2177.1 680.4 2169.0 684.9 2161.0 688.9 C2153.0 692.9 2145.0 696.8 2137.0 700.2 C2129.0 703.6 2120.9 706.6 2112.9 709.4 C2104.9 712.2 2096.8 714.7 2088.8 717.1 C2080.8 719.5 2072.8 721.5 2064.8 723.6 C2056.8 725.7 2048.7 727.7 2040.7 729.8 C2032.7 731.9 2024.6 734.1 2016.6 736.3 C2008.6 738.5 2000.5 740.7 1992.5 742.8 C1984.5 744.9 1976.5 747.2 1968.5 749.1 C1960.5 751.0 1952.4 753.0 1944.4 754.4 C1936.4 755.8 1928.3 756.7 1920.3 757.5 C1912.3 758.3 1904.3 758.8 1896.3 759.2 C1888.3 759.6 1880.2 759.8 1872.2 759.9 C1864.2 760.0 1856.1 760.0 1848.1 759.9 C1840.1 759.8 1829.9 759.4 1824.1 759.2 C1818.3 759.0 1815.3 758.8 1813.5 758.7" stroke="#fb0207" stroke-width="4" stroke-linecap="round"/>
<path d="M1834.9 743.5 C1826 748.5 1818 753.5 1813.2 757.2 Q1811.5 758.8 1814 759.6 C1824 762.5 1835 766 1845.7 768.8" stroke="#fb0207" stroke-width="4" stroke-linecap="round" stroke-linejoin="round"/>
<circle cx="2503" cy="839.5" r="2" fill="#fb0207"/>
</g>
<text x="2691.96" y="394" font-family="'Liberation Sans',sans-serif" font-size="48" fill="#d60d05" textLength="238.73" lengthAdjust="spacingAndGlyphs" >YAML code</text>
<text x="2374.55" y="449" font-family="'Liberation Sans',sans-serif" font-size="48" fill="#d60d05" textLength="388.94" lengthAdjust="spacingAndGlyphs" >Defined by the - - -</text>
<text x="2801.49" y="449" font-family="'Liberation Sans',sans-serif" font-size="48" fill="#d60d05" textLength="446.93" lengthAdjust="spacingAndGlyphs" >at the top and bottom</text>
<text x="2494.86" y="503" font-family="'Liberation Sans',sans-serif" font-size="48" fill="#d60d05" textLength="631.58" lengthAdjust="spacingAndGlyphs" >Tells R how to make the output</text>
<text x="2588.06" y="557" font-family="'Liberation Sans',sans-serif" font-size="48" fill="#d60d05" textLength="444.17" lengthAdjust="spacingAndGlyphs" >Invisible in final report</text>
<text x="1764.77" y="627" font-family="'DejaVu Sans Condensed','DejaVu Sans',sans-serif" font-size="28" fill="#f80808" textLength="178.44" lengthAdjust="spacingAndGlyphs" stroke="#f80808" stroke-width="0.6" stroke-linejoin="round" transform="skewX(-2)" transform-origin="1854.4 617">IGNORE THESE</text>
<text x="1773.51" y="659" font-family="'DejaVu Sans Condensed','DejaVu Sans',sans-serif" font-size="28" fill="#f80808" textLength="160.88" lengthAdjust="spacingAndGlyphs" stroke="#f80808" stroke-width="0.6" stroke-linejoin="round" transform="skewX(-2)" transform-origin="1854.5 649">BLANK LINES -</text>
<text x="1751.43" y="691" font-family="'DejaVu Sans Condensed','DejaVu Sans',sans-serif" font-size="28" fill="#f80808" textLength="205.08" lengthAdjust="spacingAndGlyphs" stroke="#f80808" stroke-width="0.6" stroke-linejoin="round" transform="skewX(-2)" transform-origin="1854.0 681">YOURS SHOULDN’T</text>
<text x="1788.67" y="723" font-family="'DejaVu Sans Condensed','DejaVu Sans',sans-serif" font-size="28" fill="#f80808" textLength="132.74" lengthAdjust="spacingAndGlyphs" stroke="#f80808" stroke-width="0.6" stroke-linejoin="round" transform="skewX(-2)" transform-origin="1855.0500000000002 713">HAVE THEM</text>
<text x="2973.87" y="923" font-family="'Liberation Sans',sans-serif" font-size="48" fill="#2b0a85" textLength="228.17" lengthAdjust="spacingAndGlyphs" >Report text</text>
<text x="2867.33" y="1093" font-family="'Liberation Sans',sans-serif" font-size="31.5" fill="#2c4714" textLength="191.03" lengthAdjust="spacingAndGlyphs" >“Code chunk”</text>
<text x="2861.75" y="1129" font-family="'Liberation Sans',sans-serif" font-size="31.5" fill="#2c4714" textLength="202.62" lengthAdjust="spacingAndGlyphs" >mini R console</text>
<text x="2684.52" y="1165" font-family="'Liberation Sans',sans-serif" font-size="31.5" fill="#2c4714" textLength="557.12" lengthAdjust="spacingAndGlyphs" >You can add multiple commands in them</text>
<text x="2860.07" y="1277" font-family="'Liberation Sans',sans-serif" font-size="48" fill="#2b0a85" textLength="228.37" lengthAdjust="spacingAndGlyphs" >Report text</text>
<text x="2739.44" y="1331" font-family="'Liberation Sans',sans-serif" font-size="48" fill="#2b0a85" textLength="471.62" lengthAdjust="spacingAndGlyphs" >Put in many blank lines</text>
<g id="preview-window">
<path d="M0 1776 V22 Q0 2 20 2 H1598 Q1618 2 1618 22 V1776 Z" fill="#fff"/>
<path d="M0 59 V22 Q0 2 20 2 H1598 Q1618 2 1618 22 V59 Z" fill="#28282a"/>
<path d="M0.5 22 Q0.5 2.6 20 2.6 H1598 Q1617.5 2.6 1617.5 22" fill="none" stroke="#5e5e61" stroke-width="1.1"/>
<rect x="0" y="57.8" width="1618" height="1.7" fill="#0c0c0d"/>
<rect x="1618" y="20" width="1.2" height="1756" fill="#0d0d0f"/>
<circle cx="26" cy="30" r="12.3" fill="#fe4b48"/><circle cx="66" cy="30" r="12.3" fill="#feb024"/><circle cx="106" cy="30" r="12.3" fill="#2ac131"/>
<text x="404.31" y="38" font-family="'Liberation Sans',sans-serif" font-size="26.6" fill="#a5a5a8" font-weight="700" textLength="808.45" lengthAdjust="spacingAndGlyphs" >~/Dropbox/My Mac (E2-GEO-WKML011)/Desktop/Untitled.html</text>
<rect x="0" y="59.5" width="1618" height="42.5" fill="url(#tb1)"/>
<rect x="0" y="101.5" width="1618" height="2.5" fill="#e1e3e9"/>
<text x="21.11" y="88" font-family="'DejaVu Sans',sans-serif" font-size="22.5" fill="#0d1a30" textLength="142.22" lengthAdjust="spacingAndGlyphs" >Untitled.html</text>
<text x="233.61" y="88" font-family="'DejaVu Sans',sans-serif" font-size="22.5" fill="#0a0a0a" textLength="175.79" lengthAdjust="spacingAndGlyphs" >Open in Browser</text>
<text x="1439.11" y="88" font-family="'DejaVu Sans',sans-serif" font-size="22.5" fill="#0a0a0a" textLength="79.59" lengthAdjust="spacingAndGlyphs" >Publish</text>
<path d="M1537.7 79 h10.5 l-5.25 5.6 z" fill="#111"/>
<rect x="175.5" y="63" width="1.7" height="31" fill="url(#sepd)"/><rect x="177.2" y="63" width="1.3" height="31" fill="url(#sepl)"/>
<rect x="429.7" y="63" width="1.7" height="31" fill="url(#sepd)"/><rect x="431.4" y="63" width="1.3" height="31" fill="url(#sepl)"/>
<rect x="1563.7" y="63" width="1.7" height="31" fill="url(#sepd)"/><rect x="1565.4" y="63" width="1.3" height="31" fill="url(#sepl)"/>
<rect x="445.6" y="63.1" width="236.9" height="33.6" rx="8.5" fill="#fff" stroke="#bfc8d1" stroke-width="2.2"/>
<rect x="447.4" y="64.9" width="233.3" height="30" rx="7" fill="none" stroke="#eef1f4" stroke-width="1.4"/>
<text x="493.46" y="90" font-family="'DejaVu Sans',sans-serif" font-size="19.8" fill="#5e5e5e" textLength="42.53" lengthAdjust="spacingAndGlyphs" >Find</text>
<g transform="translate(192 68)"><path d="M10 22 V5 Q10 1 14 1 H27 Q31 1 31 5 V22 Z" fill="#f6f8fc" stroke="#9db8cf" stroke-width="1.2"/><path d="M10.6 7.5 V5 Q10.6 1.6 14 1.6 H27 Q30.4 1.6 30.4 5 V7.5 Z" fill="#c5e4fb"/><path d="M4.5 9.3 H14.2 V19 L11.4 16.2 L4.6 22.6 L1.2 19.2 L7.6 12.4 Z" fill="#d3d7e3" stroke="#7f97ab" stroke-width="1.1" stroke-linejoin="round"/></g>
<circle cx="466.2" cy="78.3" r="8.1" fill="none" stroke="#929ea6" stroke-width="4.2"/><path d="M472.2 84.6 L480.6 92.2" stroke="#929ea6" stroke-width="5.4" stroke-linecap="butt"/>
<g transform="translate(1416.2 80.2) scale(1.0)" fill="none" stroke="#1b87ea" stroke-width="4.2"><path d="M-16.2 -2.5 H-9.7 A10 10 0 0 1 8.2 -5.7"/><path d="M16.2 2.5 H9.7 A10 10 0 0 1 -8.2 5.7"/><circle cx="0" cy="0" r="5.2" fill="#1b87ea" stroke="none"/></g>
<g transform="translate(1593 80.4)"><path d="M10.3 -3.2 A10.8 10.8 0 1 0 10.6 2.4" fill="none" stroke="#a3b7d6" stroke-width="7.2"/><path d="M10.3 -3.2 A10.8 10.8 0 1 0 10.6 2.4" fill="none" stroke="#dbe7f8" stroke-width="4.8"/><path d="M13.4 -14.8 V-3 H0.5 Z" fill="#dbe7f8" stroke="#a3b7d6" stroke-width="1.2" stroke-linejoin="round"/></g>
</g>
<g id="preview-doc">
<rect x="59.5" y="155" width="403.5" height="222" rx="8" fill="#fff" stroke="#bdbdbd" stroke-width="2"/>
<path d="M60.5 276 H462 V368 Q462 376 454 376 H68.5 Q60.5 376 60.5 368 Z" fill="#0f79b1"/>
<text x="89.05" y="196" font-family="'Liberation Sans',sans-serif" font-size="28" fill="#3c3c3c" textLength="294.89" lengthAdjust="spacingAndGlyphs" >1 This is a heading level 1</text>
<text x="109.55" y="254" font-family="'Liberation Sans',sans-serif" font-size="25.5" fill="#3c3c3c" textLength="284.20" lengthAdjust="spacingAndGlyphs" >1.1 This is a heading level 2</text>
<text x="129.65" y="314" font-family="'Liberation Sans',sans-serif" font-size="25.5" fill="#fff" textLength="290.68" lengthAdjust="spacingAndGlyphs" >1.1.1 and a heading level 3 -</text>
<text x="70.23" y="354" font-family="'Liberation Sans',sans-serif" font-size="25.5" fill="#fff" textLength="293.36" lengthAdjust="spacingAndGlyphs" >type what you want in them</text>
<text x="607.88" y="212" font-family="'Liberation Sans',sans-serif" font-size="72" fill="#2b2b2b" textLength="492.36" lengthAdjust="spacingAndGlyphs" >STAT-462: Lab 2</text>
<text x="607.64" y="278" font-family="'Liberation Sans',sans-serif" font-size="34.5" fill="#2b2b2b" textLength="169.51" lengthAdjust="spacingAndGlyphs" >Dr Greatrex</text>
<text x="607.67" y="337" font-family="'Liberation Sans',sans-serif" font-size="34.5" fill="#2b2b2b" textLength="165.76" lengthAdjust="spacingAndGlyphs" >2021-02-02</text>
<text x="607.36" y="392" font-family="'Liberation Sans',sans-serif" font-size="27" fill="#3c3c3c" textLength="567.53" lengthAdjust="spacingAndGlyphs" >Note the white space between the — and my text</text>
<text x="608.25" y="452" font-family="'Liberation Sans',sans-serif" font-size="27" fill="#3c3c3c" textLength="652.30" lengthAdjust="spacingAndGlyphs" >Add text in here. One full white line between paragraphs</text>
<text x="607.36" y="512" font-family="'Liberation Sans',sans-serif" font-size="27" fill="#3c3c3c" textLength="697.51" lengthAdjust="spacingAndGlyphs" >Note the white space between my text and each code chunk</text>
<rect x="609.3" y="543.2" width="897.7" height="183.3" rx="6.5" fill="#f2f2f2" stroke="#bcbcbc" stroke-width="2"/>
<text x="630" y="590" font-family="'Liberation Mono',monospace" font-size="24" fill="#8e8f7a" font-style="italic" textLength="748.8" lengthAdjust="spacingAndGlyphs" ># Code comment. Helps to remind yourself of code</text>
<text x="630" y="626" font-family="'Liberation Mono',monospace" font-size="24" fill="#8e8f7a" font-style="italic" textLength="842.4" lengthAdjust="spacingAndGlyphs" ># Comments should be short and sweet. Paragraphs go in</text>
<text x="645.6" y="662" font-family="'Liberation Mono',monospace" font-size="24" fill="#8e8f7a" font-style="italic" textLength="124.8" lengthAdjust="spacingAndGlyphs" >the text</text>
<text x="630" y="698" font-family="'Liberation Mono',monospace" font-size="24" textLength="46.8" lengthAdjust="spacingAndGlyphs"><tspan fill="#009999">1</tspan><tspan fill="#111">+</tspan><tspan fill="#009999">1</tspan></text>
<rect x="609.2" y="749.2" width="897.8" height="75.8" rx="6.5" fill="#fff" stroke="#bcbcbc" stroke-width="2"/>
<text x="630" y="796" font-family="'Liberation Mono',monospace" font-size="24" fill="#222" textLength="124.8" lengthAdjust="spacingAndGlyphs" >## [1] 2</text>
<text x="608.50" y="926" font-family="'Liberation Sans',sans-serif" font-size="64" fill="#2b2b2b" textLength="711.81" lengthAdjust="spacingAndGlyphs" >1 This is a heading level 1</text>
<text x="607.06" y="990" font-family="'Liberation Sans',sans-serif" font-size="27" fill="#3c3c3c" textLength="586.28" lengthAdjust="spacingAndGlyphs" >Note the hash-tag in the text area means headings</text>
<text x="608.45" y="1094" font-family="'Liberation Sans',sans-serif" font-size="56.5" fill="#2b2b2b" textLength="673.68" lengthAdjust="spacingAndGlyphs" >1.1 This is a heading level 2</text>
<text x="608.01" y="1156" font-family="'Liberation Sans',sans-serif" font-size="27" fill="#3c3c3c" textLength="425.30" lengthAdjust="spacingAndGlyphs" >Stars or _ around text makes it italic:</text>
<text x="1038.63" y="1156" font-family="'Liberation Sans',sans-serif" font-size="27" fill="#3c3c3c" font-style="italic" textLength="298.38" lengthAdjust="spacingAndGlyphs" >Here is italic text. So is this</text>
<text x="608.52" y="1248" font-family="'Liberation Sans',sans-serif" font-size="46.5" fill="#2b2b2b" textLength="846.63" lengthAdjust="spacingAndGlyphs" >1.1.1 and a heading level 3 - type what you</text>
<text x="609.57" y="1300" font-family="'Liberation Sans',sans-serif" font-size="46.5" fill="#2b2b2b" textLength="262.79" lengthAdjust="spacingAndGlyphs" >want in them</text>
<text x="607.94" y="1360" font-family="'Liberation Sans',sans-serif" font-size="27" fill="#3c3c3c" textLength="508.36" lengthAdjust="spacingAndGlyphs" >Double stars or _ around text makes it bold:</text>
<text x="1120.97" y="1360" font-family="'Liberation Sans',sans-serif" font-size="27" fill="#3c3c3c" font-weight="700" textLength="201.55" lengthAdjust="spacingAndGlyphs" >Here is bold text</text>
<text x="1322.6" y="1360" font-family="'Liberation Sans',sans-serif" font-size="27" fill="#3c3c3c" >.</text>
<text x="1335.49" y="1360" font-family="'Liberation Sans',sans-serif" font-size="27" fill="#3c3c3c" font-weight="700" textLength="109.62" lengthAdjust="spacingAndGlyphs" >So is this</text>
<text x="608.01" y="1422" font-family="'Liberation Sans',sans-serif" font-size="34.5" fill="#2b2b2b" textLength="296.45" lengthAdjust="spacingAndGlyphs" >1.1.1.1 and 4 etc.etc</text>
<text x="608.21" y="1478" font-family="'Liberation Sans',sans-serif" font-size="27" fill="#3c3c3c" textLength="493.10" lengthAdjust="spacingAndGlyphs" >Triple stars or _ around text makes it both:</text>
<text x="1106.29" y="1478" font-family="'Liberation Sans',sans-serif" font-size="27" fill="#3c3c3c" font-weight="700" font-style="italic" textLength="243.11" lengthAdjust="spacingAndGlyphs" >Here is bold italic text</text>
<text x="1350" y="1478" font-family="'Liberation Sans',sans-serif" font-size="27" fill="#3c3c3c" >.</text>
<text x="1362.63" y="1478" font-family="'Liberation Sans',sans-serif" font-size="27" fill="#3c3c3c" font-weight="700" font-style="italic" textLength="98.83" lengthAdjust="spacingAndGlyphs" >So is this</text>
</g>
</svg></body></html>
